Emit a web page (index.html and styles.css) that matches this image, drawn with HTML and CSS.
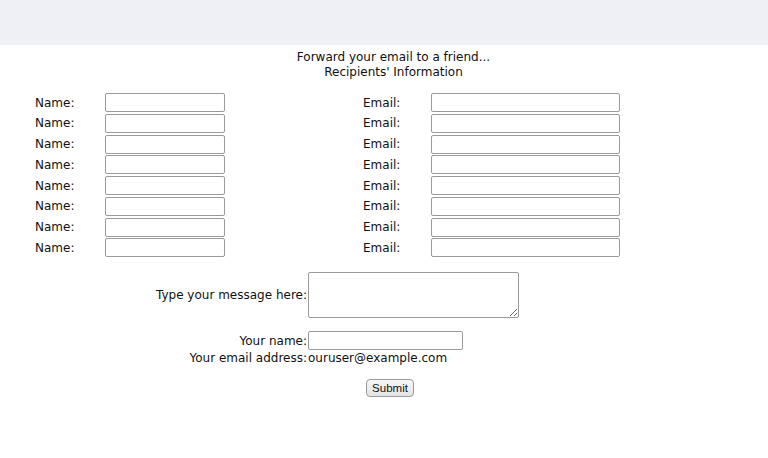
FILE: index.html
```html
<!DOCTYPE html>
<html lang="en">
<head>
  <meta charset="UTF-8">
  <meta name="viewport" content="width=device-width, initial-scale=1.0">
  <title>Forward to a friend</title>
  <link rel="stylesheet" href="styles.css">
</head>
<body>
  <div class="topbar"></div>

  <form class="forward-form" onsubmit="return false;">
    <p class="intro">Forward your email to a friend...<br>Recipients' Information</p>

    <!-- Recipient rows: name + email -->
    <div class="recipients">
      <label>Name:</label><input type="text" class="name-input">
      <label class="email-label">Email:</label><input type="text" class="email-input">
      <label>Name:</label><input type="text" class="name-input">
      <label class="email-label">Email:</label><input type="text" class="email-input">
      <label>Name:</label><input type="text" class="name-input">
      <label class="email-label">Email:</label><input type="text" class="email-input">
      <label>Name:</label><input type="text" class="name-input">
      <label class="email-label">Email:</label><input type="text" class="email-input">
      <label>Name:</label><input type="text" class="name-input">
      <label class="email-label">Email:</label><input type="text" class="email-input">
      <label>Name:</label><input type="text" class="name-input">
      <label class="email-label">Email:</label><input type="text" class="email-input">
      <label>Name:</label><input type="text" class="name-input">
      <label class="email-label">Email:</label><input type="text" class="email-input">
      <label>Name:</label><input type="text" class="name-input">
      <label class="email-label">Email:</label><input type="text" class="email-input">
    </div>

    <!-- Message -->
    <div class="message-row">
      <label for="message">Type your message here:</label>
      <textarea id="message"></textarea>
    </div>

    <!-- Sender -->
    <div class="sender">
      <label for="yourName">Your name:</label>
      <input type="text" id="yourName" class="sender-input">
      <span class="sender-label">Your email address:</span>
      <span>ouruser@example.com</span>
    </div>

    <div class="actions">
      <button type="submit">Submit</button>
    </div>
  </form>
</body>
</html>
```

FILE: styles.css
```css
body {
  margin: 0;
  padding: 0;
  font-family: 'DejaVu Sans', Verdana, sans-serif;
  font-size: 12px;
  color: #111;
  background: #fff;
}

.topbar {
  height: 45px;
  background: #eef0f6;
}

.intro {
  margin: 5px 0 0 19px;
  text-align: center;
  line-height: 15px;
}

input,
textarea {
  box-sizing: border-box;
  margin: 0;
  border: 1px solid #9a9a9a;
  border-radius: 2px;
  background: #fff;
  font: inherit;
}

/* recipients grid */
.recipients {
  display: grid;
  grid-template-columns: 70px 258px 68px 189px;
  grid-auto-rows: 19px;
  row-gap: 1.75px;
  align-items: center;
  padding-left: 35px;
  margin-top: 13px;
}

.name-input {
  width: 120px;
  height: 19px;
}

.email-input {
  width: 189px;
  height: 19px;
}

/* message + sender rows */
.message-row {
  display: grid;
  grid-template-columns: 307px 210px;
  column-gap: 1px;
  align-items: center;
  margin-top: 15px;
}

.message-row label,
.sender label,
.sender-label {
  text-align: right;
}

textarea {
  width: 211px;
  height: 46px;
  resize: both;
}

.sender {
  display: grid;
  grid-template-columns: 307px auto;
  column-gap: 1px;
  align-items: center;
  margin-top: 13px;
}

.sender-input {
  width: 155px;
  height: 19px;
}

.sender span {
  line-height: 17px;
}

.actions {
  text-align: center;
  margin-top: 12px;
  padding-left: 12px;
}

button {
  font-family: 'Liberation Sans', Arial, sans-serif;
  font-size: 11.5px;
  padding: 1px 5px;
  height: 18px;
  border: 1px solid #999;
  border-radius: 4px;
  background: linear-gradient(#f6f6f6, #e4e4e4);
  color: #111;
}
```
